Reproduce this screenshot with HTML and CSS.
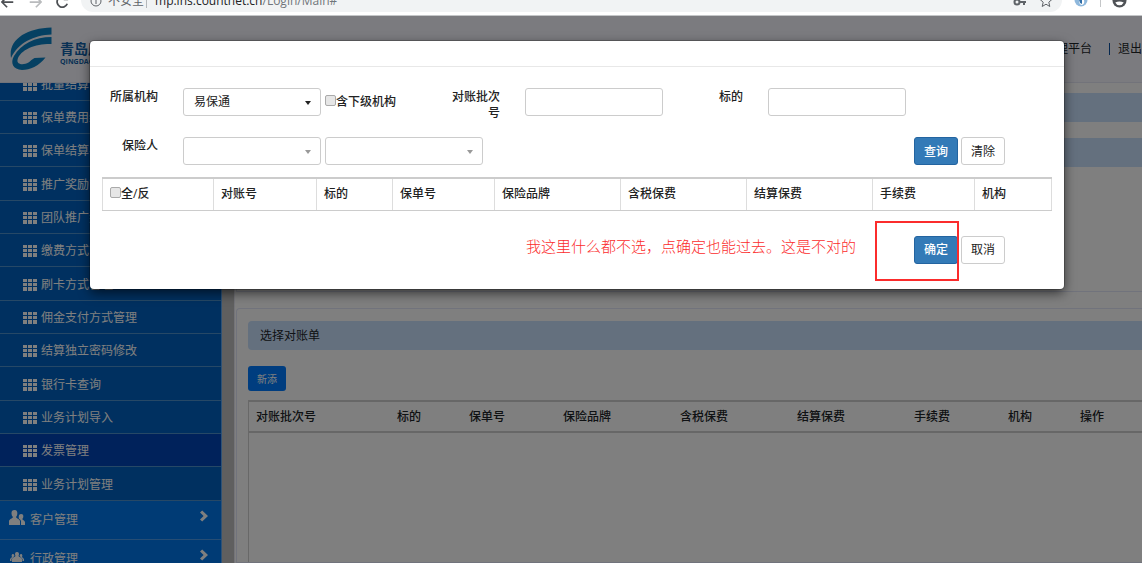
FILE: index.html
```html
<!DOCTYPE html>
<html lang="zh-CN">
<head>
<meta charset="utf-8">
<title>结算管理平台</title>
<link rel="stylesheet" href="styles.css">
</head>
<body>
<svg class="defs" aria-hidden="true">
  <symbol id="grid" viewBox="0 0 14 12"><path d="M0 0h4v3H0zM5 0h4v3H5zM10 0h4v3h-4zM0 4h4v3H0zM5 4h4v3H5zM10 4h4v3h-4zM0 8h4v4H0zM5 8h4v4H5zM10 8h4v4h-4z"/></symbol>
  <symbol id="chev" viewBox="0 0 10 12"><path d="M1 2.500 3.200.4 9 6l-5.800 5.600L1 9.500 4.600 6z"/></symbol>
</svg>

<div class="browser">
  <svg class="nav-icon" viewBox="0 0 16 16" stroke="#4d5054"><path d="M1 8h13M7 2 1 8l6 6"/></svg>
  <svg class="nav-icon" viewBox="0 0 16 16" stroke="#b9bbbd"><path d="M2 8h13M9 2l6 6-6 6"/></svg>
  <svg class="nav-icon" viewBox="0 0 16 16" stroke="#4d5054"><path d="M13 4a6 6 0 1 0 1 6M14 1v4h-4"/></svg>
  <div class="address">
    <svg class="info" viewBox="0 0 12 12"><circle cx="6" cy="6" r="5"/><path d="M6 5v4M6 3v1"/></svg>
    <span class="insecure">不安全</span><span class="divider"></span>
    <span class="url">mp.ins.countnet.cn<span class="path">/Login/Main#</span></span>
    <svg class="key" viewBox="0 0 14 12"><circle cx="4" cy="7" r="2.500"/><path d="M7 7h6M11 7v3"/></svg>
    <svg class="star" viewBox="0 0 14 14"><path d="m7 1 1.800 4 4.200.4-3.200 2.800 1 4.300L7 10.200l-3.800 2.300 1-4.300L1 5.400 5.200 5z"/></svg>
  </div>
  <svg class="ext" viewBox="0 0 14 14"><circle cx="7" cy="7" r="6.500" fill="#8fb8dc"/><path d="M5 7q0 5 3 5 3-1 2-5z" fill="#fff"/><path d="M5 6h3v5q-3-1-3-5" fill="#2f6ea8"/></svg>
  <span class="bar-line"></span>
  <svg class="avatar" viewBox="0 0 16 16"><circle cx="8" cy="8" r="7.500" fill="#4f5256"/><path d="M3.500 10q4.500-2 9 0-1.500 3-4.500 3t-4.500-3" fill="#fff"/></svg>
</div>

<div class="app">
  <header class="top">
    <svg class="logo" viewBox="0 0 42 44">
      <path d="M41.500.5v7C24 8 8 16 1 31-2 13 16 1 41.500.5z"/>
      <path d="M41.500 10v7C27 16.500 10 22 7.500 33c-1 4.500 6 5.500 11 2.500 2-1.200 3-3 6-4.500l11-.5C29 39 20 43 12 43 3 42.500 0 36 4 29 11 17 25 10 41.500 10z"/>
    </svg>
    <div class="brand"><strong>青岛康</strong><span>QINGDAO</span></div>
    <div class="account"><span>管理平台</span><i></i><a href="#">退出</a></div>
  </header>

  <div class="body">
    <nav class="side">
      <ul class="sub">
        <li><svg><use href="#grid"/></svg><a href="#">批量结算管理</a></li>
        <li><svg><use href="#grid"/></svg><a href="#">保单费用结算</a></li>
        <li><svg><use href="#grid"/></svg><a href="#">保单结算导入</a></li>
        <li><svg><use href="#grid"/></svg><a href="#">推广奖励审核</a></li>
        <li><svg><use href="#grid"/></svg><a href="#">团队推广奖励</a></li>
        <li><svg><use href="#grid"/></svg><a href="#">缴费方式管理</a></li>
        <li><svg><use href="#grid"/></svg><a href="#">刷卡方式管理</a></li>
        <li><svg><use href="#grid"/></svg><a href="#">佣金支付方式管理</a></li>
        <li><svg><use href="#grid"/></svg><a href="#">结算独立密码修改</a></li>
        <li><svg><use href="#grid"/></svg><a href="#">银行卡查询</a></li>
        <li><svg><use href="#grid"/></svg><a href="#">业务计划导入</a></li>
        <li class="active"><svg><use href="#grid"/></svg><a href="#">发票管理</a></li>
        <li><svg><use href="#grid"/></svg><a href="#">业务计划管理</a></li>
      </ul>
      <ul class="groups">
        <li><svg class="people" viewBox="0 0 16 16"><path d="M5.500 0C8 0 8.500 2 8.300 4 8 6 7.500 6.500 7 7c0 1 3.500 2 4 4v4H0v-4c.5-2 4-3 4-4-1-1-1.500-2-1.500-4 0-2 1-3 3-3zM12 4c2 0 2.500 1 2.300 3-.2 1-.6 1.500-1 2 .2 1 2.200 1.500 2.700 3v3h-4v-4c-.2-1-1-1.500-2-2.300C9.600 7 9.500 4 12 4z"/></svg><a href="#">客户管理</a><svg class="chev"><use href="#chev"/></svg></li>
        <li><svg class="people" viewBox="0 0 16 16"><path d="M8 3c2 0 2.500 2 1.500 4 .5 1 3 1.500 3.500 3v3H3v-3c.5-1.500 3-2 3.500-3C5.500 5 6 3 8 3zM4 5c1 0 1.500 1 1.300 2L2.500 10v2H1v-2l2-2c-.6-1-.6-3 1-3zM12 5c1.600 0 1.600 2 1 3l2 2v2h-1.500v-2l-2.800-3c-.2-1 .3-2 1.300-2z"/></svg><a href="#">行政管理</a><svg class="chev"><use href="#chev"/></svg></li>
      </ul>
    </nav>

    <main class="main">
      <section class="panel first">
        <h2 class="bar"></h2>
        <h2 class="bar"></h2>
      </section>
      <section class="panel second">
        <h2 class="bar">选择对账单</h2>
        <button class="add" type="button">新添</button>
        <div class="list">
          <table class="grid-table">
            <colgroup><col class="w141"><col class="w72"><col class="w94"><col class="w117"><col class="w117"><col class="w117"><col class="w94"><col class="w72"><col></colgroup>
            <thead><tr><th>对账批次号</th><th>标的</th><th>保单号</th><th>保险品牌</th><th>含税保费</th><th>结算保费</th><th>手续费</th><th>机构</th><th>操作</th></tr></thead>
          </table>
        </div>
      </section>
    </main>
  </div>

  <div class="backdrop">
    <div class="modal" role="dialog" aria-label="选择对账单">
      <div class="modal-head"></div>
      <form class="modal-body">
        <div class="fields">
          <label class="name" for="org">所属机构</label>
          <div class="group">
            <span class="pick"><select id="org"><option>易保通</option></select></span>
            <label class="check"><input type="checkbox">含下级机构</label>
          </div>
          <label class="name" for="batch">对账批次号</label>
          <input class="text" id="batch" type="text">
          <label class="name" for="target">标的</label>
          <input class="text" id="target" type="text">
        </div>
        <div class="fields row2">
          <label class="name" for="insurer">保险人</label>
          <div class="group">
            <span class="pick muted"><select id="insurer"><option></option></select></span>
            <span class="pick muted wide"><select aria-label="保险人分支"><option></option></select></span>
          </div>
          <div class="actions">
            <button class="btn primary" type="button">查询</button>
            <button class="btn" type="button">清除</button>
          </div>
        </div>
        <table class="result">
          <colgroup><col class="w111"><col class="w103"><col class="w76"><col class="w102"><col class="w126"><col class="w126"><col class="w126"><col class="w102"><col></colgroup>
          <thead><tr><th><label class="check"><input type="checkbox">全/反</label></th><th>对账号</th><th>标的</th><th>保单号</th><th>保险品牌</th><th>含税保费</th><th>结算保费</th><th>手续费</th><th>机构</th></tr></thead>
        </table>
        <div class="actions foot">
          <p class="note">我这里什么都不选，点确定也能过去。这是不对的</p>
          <span class="marked"><button class="btn primary" type="button">确定</button></span>
          <button class="btn" type="button">取消</button>
        </div>
      </form>
    </div>
  </div>
</div>
</body>
</html>
```

FILE: styles.css
```css
* { box-sizing: border-box; }
body {
  margin: 0;
  height: 100vh;
  display: flex;
  flex-direction: column;
  overflow: hidden;
  font: 12px/16px "Open Sans", "Noto Sans CJK SC", sans-serif;
  color: #212529;
}
ul { list-style: none; margin: 0; padding: 0; }
a { color: inherit; text-decoration: none; }
h2, p { margin: 0; font-weight: 400; }
button, input, select { font: inherit; color: inherit; }
.defs { display: none; }

/* browser toolbar, scrolled partly out of view */
.browser {
  height: 16px;
  flex: none;
  display: flex;
  align-items: flex-end;
  overflow: hidden;
  background: #fff;
  border-bottom: 1px solid #c4c6c8;
}
.nav-icon { width: 14px; height: 14px; flex: none; margin: 0 12px 6px 1px; fill: none; stroke-width: 2; }
.address {
  flex: 1;
  height: 22px;
  margin-bottom: 3px;
  padding: 0 9px;
  display: flex;
  align-items: center;
  border-radius: 0 0 12px 12px;
  background: #f1f3f4;
  color: #5f6368;
}
.address svg { fill: none; stroke: #5f6368; stroke-width: 1; flex: none; }
.info { width: 12px; height: 12px; margin-right: 6px; }
.divider { width: 1px; height: 14px; margin: 0 8px 0 2px; background: #b5b8bb; }
.url { flex: 1; color: #202124; }
.path { color: #70757a; }
.address .key { width: 14px; height: 12px; margin-right: 12px; stroke-width: 2; }
.star { width: 14px; height: 14px; }
.ext { width: 14px; height: 14px; margin: 0 12px 8px; }
.bar-line { width: 1px; height: 12px; margin-bottom: 8px; background: #c4c6c8; }
.avatar { width: 15px; height: 15px; margin: 0 15px 7px 11px; }

.app { flex: 1; min-height: 0; position: relative; display: flex; flex-direction: column; }

.top {
  height: 67px;
  flex: none;
  display: flex;
  align-items: center;
  padding-left: 10px;
  background: #f6f7fe;
  border-bottom: 1px solid #e4e6f4;
}
.logo { width: 42px; height: 44px; fill: #0a80c4; }
.brand { flex: 1; display: flex; flex-direction: column; margin-left: 8px; padding-top: 10px; color: #1263ab; }
.brand strong { font-size: 14px; }
.brand span { font-size: 7px; line-height: 10px; font-weight: 700; }
.account { display: flex; align-items: center; width: 70px; flex: none; justify-content: flex-end; white-space: nowrap; }
.account { width: auto; }
.account i { width: 1px; height: 12px; margin: 0 8px 0 17px; background: #0b4f9e; }

.body { flex: 1; min-height: 0; display: flex; background: #bebebe; }
.side { width: 222px; flex: none; overflow: hidden; color: #fff; background: #0077ea; border-right: 1px solid #5aa5ee; }
.sub { margin-top: -16px; }
.side svg { fill: #fff; flex: none; }
.sub li {
  height: 33px;
  display: flex;
  align-items: center;
  padding: 2px 0 0 23px;
  gap: 4px;
  background: #0060c0;
  border-bottom: 1px solid #4d90cc;
}
.sub li:nth-child(3n + 1) { height: 34px; }
.sub li.active { background: #0044b6; }
.sub svg { width: 14px; height: 12px; }
.groups li { height: 39px; display: flex; align-items: center; padding: 0 12px 0 9px; border-bottom: 1px solid #4d9be8; }
.groups a { flex: 1; margin-left: 5px; }
.people { width: 16px; height: 16px; margin-bottom: 4px; }
.groups .chev { width: 10px; height: 12px; margin-bottom: 9px; }

.main { flex: 1; min-width: 0; margin-left: 12px; padding-left: 1px; display: flex; flex-direction: column; gap: 16px; background: #fff; border-left: 1px solid #e8e8f2; }
.panel { padding-left: 11px; border: solid #e2e6f8; border-width: 0 0 1px 1px; background: #fff; }
.first { height: 209px; flex: none; padding-top: 10px; }
.first .bar + .bar { margin-top: 16px; }
.second { flex: 1; min-height: 0; padding-top: 12px; display: flex; flex-direction: column; align-items: flex-start; border-top-width: 1px; border-top-left-radius: 4px; }
.bar { align-self: stretch; height: 29px; padding: 7px 12px; font-size: 12px; line-height: 16px; background: #c8e0fc; border-radius: 4px 0 0 4px; }
.add { height: 25px; margin: 16px 0 9px; padding: 0 9px; border: 0; border-radius: 3px; background: #007bff; color: #fff; font-size: 10px; }
.list { flex: 1; align-self: stretch; border-left: 1px solid #d0d0d0; }

table { width: 100%; table-layout: fixed; border-collapse: collapse; }
th { text-align: left; font-weight: 500; padding: 0 7px; white-space: nowrap; }
.grid-table th { height: 31px; border: solid #cfcfcf; border-width: 2px 0; }
.w72 { width: 72px; }
.w76 { width: 76px; }
.w94 { width: 94px; }
.w102 { width: 102px; }
.w103 { width: 103px; }
.w111 { width: 111px; }
.w117 { width: 117px; }
.w126 { width: 126px; }
.w141 { width: 141px; }

.backdrop { position: absolute; inset: 0; padding: 25px 78px 0 90px; background: rgba(0, 0, 0, .5); }
.modal { background: #fff; border-radius: 4px; box-shadow: 0 4px 12px rgba(0, 0, 0, .6), 0 0 0 1px rgba(0, 0, 0, .2); color: #222; }
.modal-head { height: 26px; border-bottom: 1px solid #e8e8e8; }
.modal-body { padding: 21px 12px 25px; }
.fields {
  display: grid;
  grid-template-columns: 56px 244px 48px 169px 24px 1fr;
  column-gap: 25px;
  align-items: start;
}
.row2 { margin-top: 16px; }
.name { text-align: right; font-weight: 500; padding-top: 1px; }
.group { display: flex; align-items: center; gap: 4px; }
.pick { position: relative; flex: none; width: 138px; }
.pick.wide { width: 158px; }
.pick::after {
  content: "";
  position: absolute;
  right: 10px;
  top: 13px;
  border: solid transparent;
  border-width: 4px 3px 0;
  border-top-color: #222;
  pointer-events: none;
}
.pick.muted::after { border-top-color: #999; }
select, .text { display: block; height: 28px; border: 1px solid #ccc; border-radius: 3px; background: #fff; padding: 0 10px; }
select { width: 100%; appearance: none; }
.text { width: 138px; }
.check { display: flex; align-items: center; font-weight: 500; white-space: nowrap; }
.check input { appearance: none; width: 11px; height: 11px; margin: 0 0 3px; border: 1px solid #aaa; border-radius: 2px; background: #e6e6e6; }
.row2 .actions { grid-column: 3 / -1; }
.actions { display: flex; justify-content: flex-end; align-items: center; gap: 3px; padding-right: 47px; }
.btn { width: 44px; height: 28px; padding: 1px 0 0; border: 1px solid #ccc; border-radius: 3px; background: #fff; }
.btn.primary { background: #337ab7; border-color: #2364a0; color: #fff; font-weight: 500; }
.result { margin-top: 12px; }
.result th { height: 32px; border: 1px solid #ddd; border-top: 2px solid #ccc; border-bottom-color: #ccc; }
.foot { margin-top: 25px; }
.note { margin: 0 55px 8px 0; font-size: 15px; font-weight: 300; line-height: 20px; color: #fb2c2c; }
.marked { position: relative; display: flex; }
.marked::after { content: ""; position: absolute; inset: -15px -1px -17px -39px; border: 2px solid #fb2c2c; pointer-events: none; }
```
